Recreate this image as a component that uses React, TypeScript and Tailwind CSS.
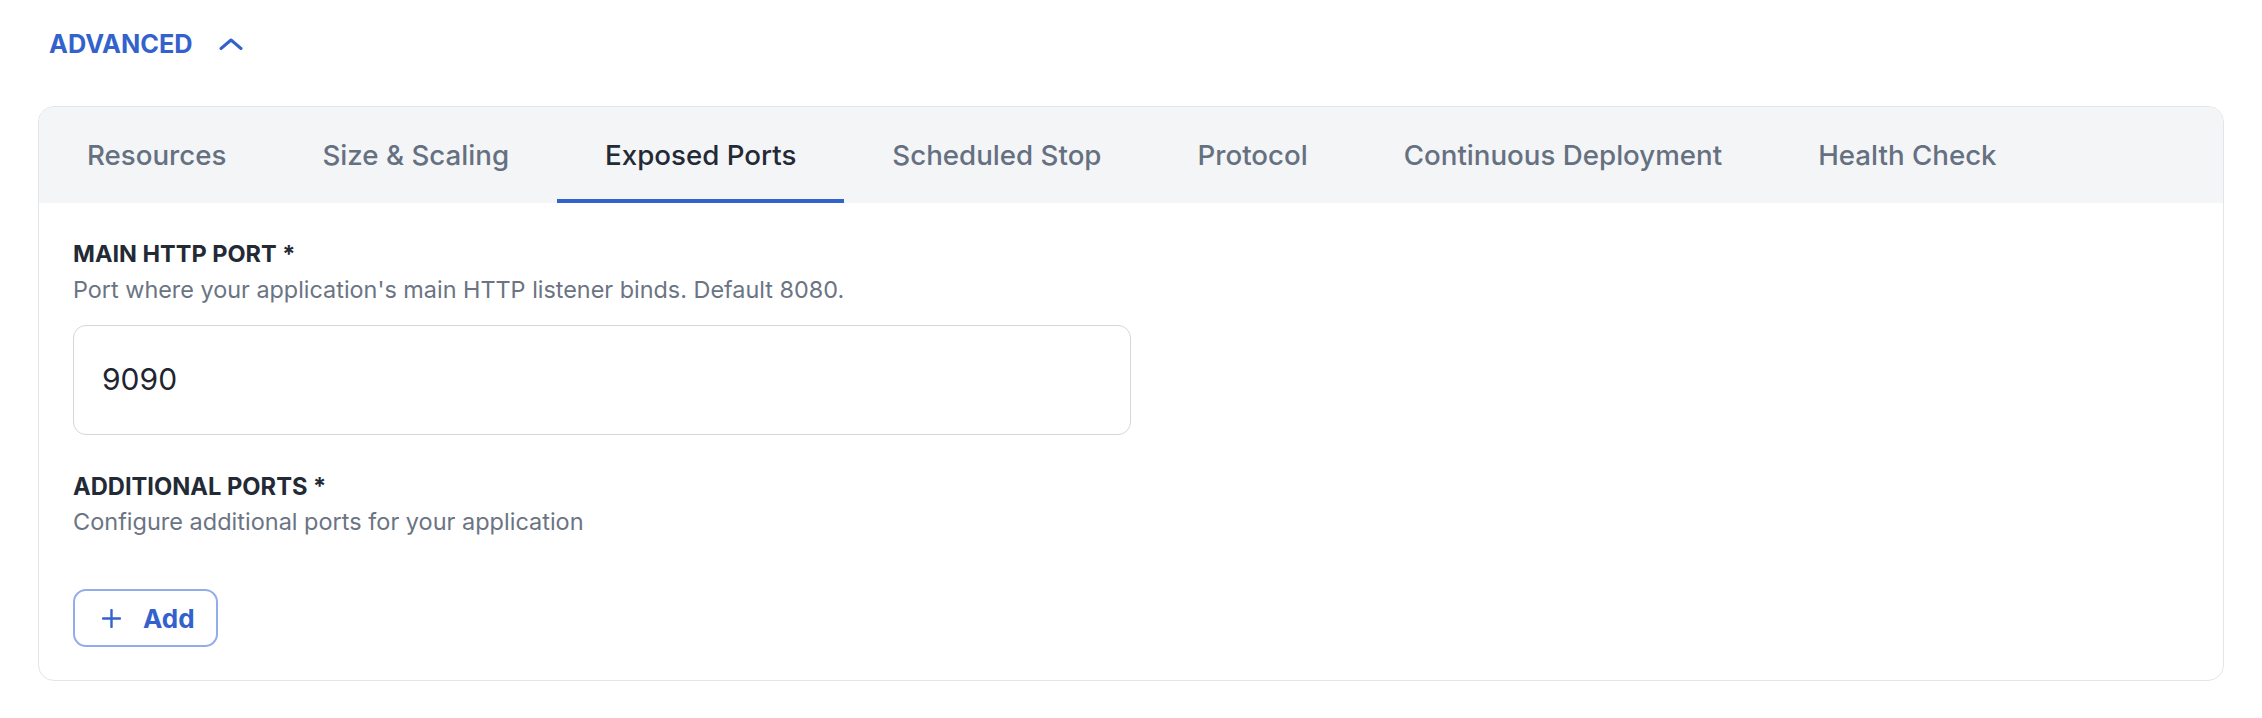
const tabs = [
  "Resources",
  "Size & Scaling",
  "Exposed Ports",
  "Scheduled Stop",
  "Protocol",
  "Continuous Deployment",
  "Health Check",
];

function ChevronUp() {
  return (
    <svg width="24" height="12" viewBox="0 0 24 12" fill="none">
      <path d="M2 10.5L12 2l10 8.5" stroke="#3462cc" strokeWidth="3" strokeLinecap="round" strokeLinejoin="round" />
    </svg>
  );
}

function Plus() {
  return (
    <svg width="19" height="19" viewBox="0 0 19 19" fill="none">
      <path d="M9.5 1v17M1 9.5h17" stroke="#3462cc" strokeWidth="2.4" strokeLinecap="round" />
    </svg>
  );
}

export default function App() {
  const active = "Exposed Ports";

  return (
    <div className="min-h-screen bg-white px-[38px] font-['Inter',sans-serif]">
      <div className="pt-[31px] pl-[11px] flex items-center gap-[26px]">
        <span className="text-[25.3px] leading-none font-bold text-[#3462cc]">ADVANCED</span>
        <ChevronUp />
      </div>

      <div className="mt-[50px] border border-[#e3e5e9] rounded-[16px] overflow-hidden">
        <div className="flex bg-[#f4f5f7] h-[96px]">
          {tabs.map((t) => (
            <div
              key={t}
              className={`px-[48px] flex items-center text-[27.7px] leading-none font-medium border-b-4 ${
                t === active ? "text-[#232a35] border-[#3462cc]" : "text-[#657081] border-transparent"
              }`}
            >
              <span className="mt-[5px]">{t}</span>
            </div>
          ))}
        </div>

        <div className="px-[34px] pt-[39px] pb-[33px]">
          <div className="text-[23.5px] leading-none font-bold text-[#232a35]">MAIN HTTP PORT *</div>
          <div className="mt-[12.5px] text-[23.4px] leading-none text-[#6b7483]">
            Port where your application's main HTTP listener binds. Default 8080.
          </div>
          <div className="mt-[23px] w-[1058px] h-[110px] border-[1.5px] border-[#d4d7dd] rounded-[13px] flex items-center pl-[28px] text-[30px] text-[#1f2530]">
            9090
          </div>

          <div className="mt-[40px] text-[23.7px] leading-none font-bold text-[#232a35]">ADDITIONAL PORTS *</div>
          <div className="mt-[11.5px] text-[23.5px] leading-none text-[#6b7483]">
            Configure additional ports for your application
          </div>

          <button className="mt-[56px] h-[58px] w-[145px] border-2 border-[#93aceb] rounded-[13px] flex items-center pl-[27px] gap-[22px] text-[26px] font-bold text-[#3462cc]">
            <Plus />
            <span>Add</span>
          </button>
        </div>
      </div>
    </div>
  );
}
